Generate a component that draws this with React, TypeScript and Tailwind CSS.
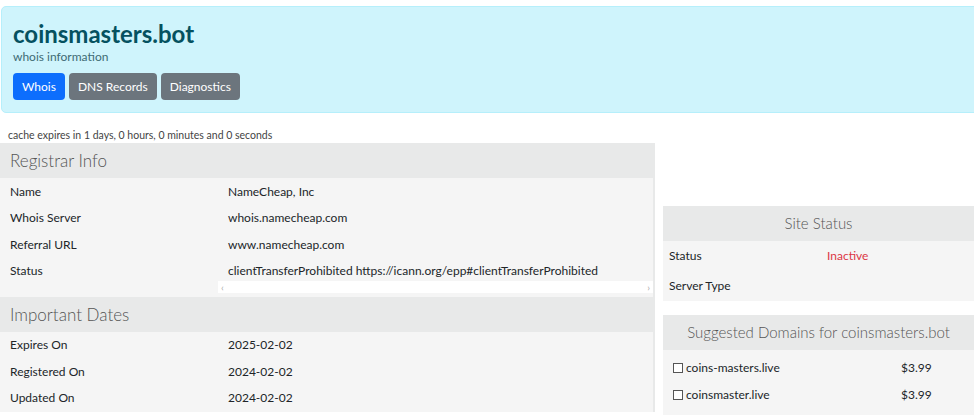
import React from 'react';

const registrar = [
    { label: 'Name', value: 'NameCheap, Inc' },
    { label: 'Whois Server', value: 'whois.namecheap.com' },
    { label: 'Referral URL', value: 'www.namecheap.com' },
];

const dates = [
    { label: 'Expires On', value: '2025-02-02' },
    { label: 'Registered On', value: '2024-02-02' },
    { label: 'Updated On', value: '2024-02-02' },
];

const suggestions = [
    { name: 'coins-masters.live', price: '$3.99' },
    { name: 'coinsmaster.live', price: '$3.99' },
    { name: 'coinsbuild.live', price: '$3.99' },
];

const PanelHeader = ({ title, center }: { title: string; center?: boolean }) => (
    <div className={`h-[35px] bg-[#e8e9e9] flex items-center px-[10px] font-light text-[#555] whitespace-nowrap ${center ? 'justify-center text-[15px]' : 'text-[17px]'}`}>
        {title}
    </div>
);

const Row = ({ label, value }: { label: string; value: string }) => (
    <div className="flex h-[26.5px] items-center text-[12px] text-[#212529]">
        <div className="w-[228px] pl-[10px] shrink-0">{label}</div>
        <div className="whitespace-nowrap">{value}</div>
    </div>
);

export default function App() {
    return (
        <div className="w-[974px] h-[415px] overflow-hidden bg-white font-['Lato',sans-serif]">
            <div className="pt-[6px] pl-[1px]">
                <div className="w-[1000px] h-[107px] bg-[#cff4fc] border border-[#b6effb] rounded-l-[5px] pl-[11px] pt-[14px]">
                    <h1 className="text-[24px] leading-[26px] font-bold text-[#055160]">coinsmasters.bot</h1>
                    <p className="text-[12px] leading-[16px] text-[#3e6b74] mt-[2px]">whois information</p>
                    <div className="flex gap-[4px] mt-[8px]">
                        <button className="h-[27px] px-[9px] rounded-[4px] bg-[#0d6efd] text-white text-[12px]">Whois</button>
                        <button className="h-[27px] px-[9px] rounded-[4px] bg-[#6c757d] text-white text-[12px]">DNS Records</button>
                        <button className="h-[27px] px-[9px] rounded-[4px] bg-[#6c757d] text-white text-[12px]">Diagnostics</button>
                    </div>
                </div>
            </div>

            <div className="flex mt-[14px]">
                <div className="w-[655px] shrink-0">
                    <p className="text-[10.5px] text-[#444] pl-[8px] h-[16px] leading-[16px]">cache expires in 1 days, 0 hours, 0 minutes and 0 seconds</p>
                    <div className="border-r-2 border-[#e8e9e9]">
                        <PanelHeader title="Registrar Info" />
                        <div className="bg-[#f5f5f5] pt-[0.5px]">
                            {registrar.map((r) => (
                                <Row key={r.label} {...r} />
                            ))}
                            <div className="flex h-[22px] items-end text-[12px] text-[#212529]">
                                <div className="w-[228px] pl-[10px] shrink-0">Status</div>
                                <div className="whitespace-nowrap">clientTransferProhibited https://icann.org/epp#clientTransferProhibited</div>
                            </div>
                            <div className="flex h-[12px] mt-[1px]">
                                <div className="w-[218px] shrink-0" />
                                <div className="flex-1 bg-white flex items-center justify-between px-[3px] text-[10px] text-[#aaa]">
                                    <span>&lsaquo;</span>
                                    <span>&rsaquo;</span>
                                </div>
                            </div>
                            <div className="h-[4px]" />
                        </div>
                        <PanelHeader title="Important Dates" />
                        <div className="bg-[#f5f5f5]">
                            {dates.map((r) => (
                                <Row key={r.label} {...r} />
                            ))}
                        </div>
                    </div>
                </div>

                <div className="ml-[8px] w-[311px] shrink-0 pt-[79px]">
                    <PanelHeader title="Site Status" center />
                    <div className="bg-[#f5f5f5]">
                        <div className="flex h-[30px] items-center text-[12px]">
                            <div className="w-[164px] pl-[6px] text-[#212529]">Status</div>
                            <div className="text-[#dc3545]">Inactive</div>
                        </div>
                        <div className="flex h-[30px] items-center text-[12px]">
                            <div className="w-[164px] pl-[6px] text-[#212529]">Server Type</div>
                            <div />
                        </div>
                    </div>
                    <div className="mt-[14px]">
                        <PanelHeader title="Suggested Domains for coinsmasters.bot" center />
                        <div className="bg-[#f5f5f5] pt-[4px]">
                            {suggestions.map((s) => (
                                <div key={s.name} className="flex h-[27px] items-center text-[12px] text-[#212529]">
                                    <div className="w-[238px] pl-[10px] flex items-center">
                                        <span className="inline-block w-[10px] h-[10px] border border-[#555] bg-white" />
                                        <span className="ml-[3px]">{s.name}</span>
                                    </div>
                                    <div>{s.price}</div>
                                </div>
                            ))}
                        </div>
                    </div>
                </div>
            </div>
        </div>
    );
}
